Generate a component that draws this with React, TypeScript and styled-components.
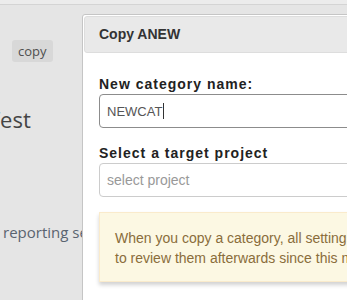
import React from "react";
import styled, { createGlobalStyle } from "styled-components";

const GlobalStyle = createGlobalStyle`
  html, body {
    margin: 0;
    padding: 0;
  }
  body {
    width: 347px;
    height: 300px;
    overflow: hidden;
    background: #e5e5e5;
    font-family: "Liberation Sans", Arial, sans-serif;
  }
`;

const Page = styled.div`
  position: relative;
  width: 347px;
  height: 300px;
  overflow: hidden;
`;

const TopBar = styled.div`
  height: 4px;
  background: #ececec;
  border-bottom: 1px solid #d4d4d4;
`;

const Main = styled.div`
  display: flex;
  flex-direction: column;
  align-items: flex-start;
  font-family: "Open Sans", "Liberation Sans", sans-serif;
`;

const Badge = styled.span`
  margin: 35px 0 0 12px;
  height: 22px;
  padding: 0 6px;
  line-height: 22px;
  font-size: 13px;
  color: #4f4f4f;
  background: #d8d8d8;
  border-radius: 3px;
`;

const PageTitle = styled.h1`
  margin: 42px 0 0 -12px;
  font-size: 22px;
  font-weight: 400;
  line-height: 30px;
  color: #444;
  white-space: nowrap;
`;

const Note = styled.div<{ $gap: number }>`
  margin: ${(p) => p.$gap}px 0 0 3px;
  font-size: 15px;
  line-height: 20px;
  color: #5a6470;
  white-space: nowrap;
`;

const Dialog = styled.div`
  position: absolute;
  left: 82px;
  top: 14px;
  width: 460px;
  padding: 1px;
  background: #fff;
  border: 1px solid #c5c5c5;
  border-radius: 3px;
`;

const TitleBar = styled.div`
  padding: 8px 14px;
  background: #e9e9e9;
  border: 1px solid #dddddd;
  border-radius: 3px;
  font-size: 14px;
  font-weight: 700;
  line-height: 19px;
  color: #333;
`;

const Body = styled.div`
  padding: 22px 15px 20px;
`;

const Label = styled.label<{ $top?: number }>`
  display: block;
  margin-top: ${(p) => p.$top ?? 0}px;
  font-size: 14px;
  font-weight: 700;
  letter-spacing: 1px;
  line-height: 19px;
  color: #222;
`;

const Field = styled.div<{ $active?: boolean }>`
  display: flex;
  align-items: center;
  height: 34px;
  box-sizing: border-box;
  padding: 0 7px;
  border: 1px solid ${(p) => (p.$active ? "#8c8c8c" : "#cccccc")};
  border-radius: 4px;
  font-size: ${(p) => (p.$active ? 13 : 14)}px;
  color: ${(p) => (p.$active ? "#555" : "#999")};
`;

const Caret = styled.span`
  width: 1px;
  height: 16px;
  margin-left: 1px;
  background: #333;
`;

const Alert = styled.div`
  margin-top: 15px;
  padding: 15px 15px 13px;
  background: #fcf8e3;
  border: 1px solid #faebcc;
  box-shadow: 0 3px 4px rgba(0, 0, 0, 0.18);
  font-size: 14px;
  line-height: 20px;
  color: #8a6d3b;
  white-space: nowrap;
`;

export default function App() {
  return (
    <Page>
      <GlobalStyle />
      <TopBar />
      <Main>
        <Badge>copy</Badge>
        <PageTitle>Test</PageTitle>
        <Note $gap={88}>reporting settings</Note>
        <Note $gap={54}>Include fields</Note>
      </Main>
      <Dialog>
        <TitleBar>Copy ANEW</TitleBar>
        <Body>
          <Label>New category name:</Label>
          <Field $active>
            NEWCAT
            <Caret />
          </Field>
          <Label $top={16}>Select a target project</Label>
          <Field>select project</Field>
          <Alert>
            When you copy a category, all settings are copied as well. Make sure
            <br />
            to review them afterwards since this may overwrite existing data.
          </Alert>
        </Body>
      </Dialog>
    </Page>
  );
}
